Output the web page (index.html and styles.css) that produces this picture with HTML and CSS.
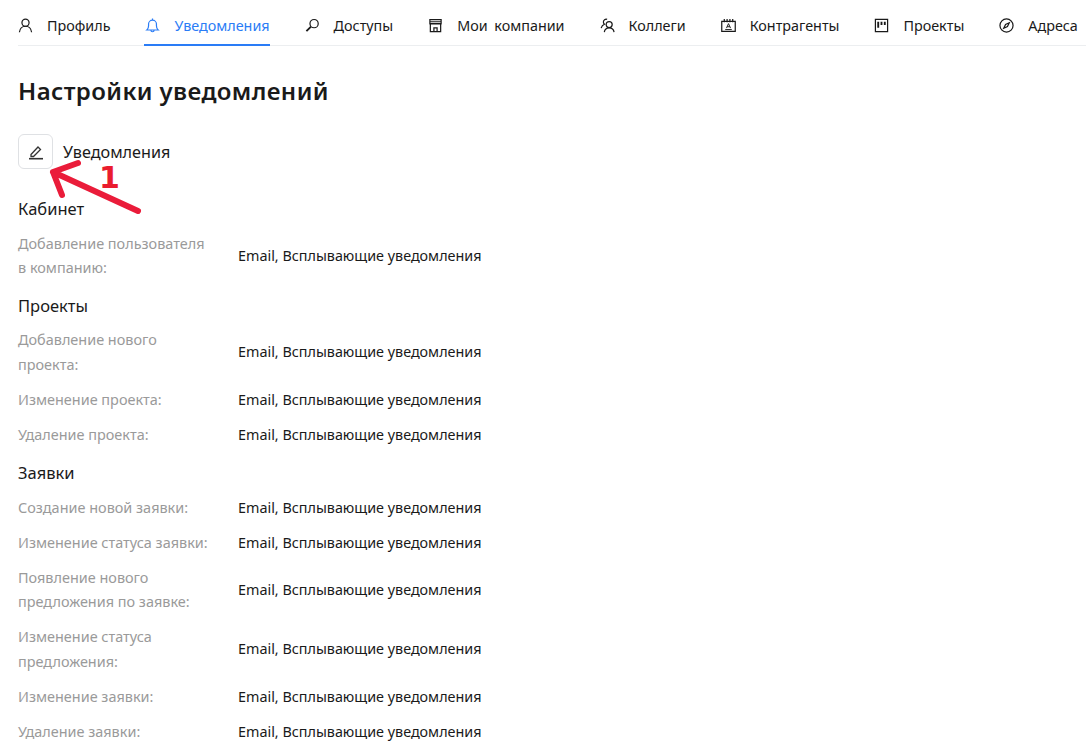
FILE: index.html
```html
<!DOCTYPE html>
<html lang="ru">
<head>
<meta charset="utf-8">
<title>Настройки уведомлений</title>
<link rel="stylesheet" href="styles.css">
</head>
<body>
<div class="page">
  <nav class="tabs">
    <a class="tab"><svg class="ico" viewBox="0 0 16 16"><circle cx="8" cy="5" r="3.800"/><path d="M1.500 15.200c.5-3.800 3-6.400 6.500-6.400s6 2.600 6.500 6.400"/></svg>Профиль</a>
    <a class="tab active"><svg class="ico" viewBox="0 0 16 16"><path d="M2 12.800c1.200-1 1.800-2.500 1.800-4.500V6.500a4.200 4.200 0 0 1 8.400 0v1.800c0 2 .6 3.500 1.800 4.500zM6.300 13c0 2.200 3.400 2.200 3.400 0M8 .6v1.600"/></svg>Уведомления</a>
    <a class="tab"><svg class="ico" viewBox="0 0 16 16"><circle cx="9.700" cy="6" r="4.400"/><path d="M6.400 9.200L1.500 14" stroke-width="2"/></svg>Доступы</a>
    <a class="tab"><svg class="ico" viewBox="0 0 16 16"><path d="M2 1.800h12V6H2zM1.500 6.200h13M2.500 6.500v8h11v-8M2 4h12M6.300 14v-3.500h3.400V14"/></svg>Мои компании</a>
    <a class="tab"><svg class="ico" viewBox="0 0 16 16"><circle cx="9.800" cy="7" r="3.200"/><path d="M4.600 15c.5-2.800 2.500-4.400 5.200-4.400s4.700 1.600 5.200 4.400M7.600 1.500A3 3 0 0 0 3.600 4.300c0 1 .5 1.800 1.200 2.400C3 7.400 1.800 8.800 1.200 10.800"/></svg>Коллеги</a>
    <a class="tab"><svg class="ico" viewBox="0 0 16 16"><path d="M.8 3.500h14.400v10.800H.8zM3.500 1v3.500M6.500 1v3.500M9.500 1v3.500M12.500 1v3.500"/><path class="thin" d="M5.800 10.800L8 6l2.200 4.800M6.500 9.300h3M4.500 12.300h7"/></svg>Контрагенты</a>
    <a class="tab"><svg class="ico" viewBox="0 0 16 16"><path d="M1.500 1.500h13v13h-13z"/><path d="M4.500 4v6.500M8 4v3.500M11.500 4v3.500" stroke-width="2"/></svg>Проекты</a>
    <a class="tab"><svg class="ico" viewBox="0 0 16 16"><circle cx="8" cy="8" r="7"/><path d="M11 5L7 6.800 5 11l4-1.800z"/></svg>Адреса</a>
  </nav>

  <h1 class="title">Настройки уведомлений</h1>

  <div class="edit-row">
    <button class="edit-btn" type="button"><svg class="ico-edit" viewBox="0 0 16 16"><path d="M3 10.500l7-7.500 2.500 2.500L5.500 12.500H3z"/><path class="rule" d="M1 14.700h14"/></svg></button>
    <span class="edit-label">Уведомления</span>
  </div>

  <h2 class="group first">Кабинет</h2>
  <div class="row"><div class="name">Добавление пользователя<br>в компанию:</div><div class="val">Email, Всплывающие уведомления</div></div>

  <h2 class="group tight">Проекты</h2>
  <div class="row"><div class="name">Добавление нового<br>проекта:</div><div class="val">Email, Всплывающие уведомления</div></div>
  <div class="row"><div class="name">Изменение проекта:</div><div class="val">Email, Всплывающие уведомления</div></div>
  <div class="row"><div class="name">Удаление проекта:</div><div class="val">Email, Всплывающие уведомления</div></div>

  <h2 class="group loose">Заявки</h2>
  <div class="row"><div class="name">Создание новой заявки:</div><div class="val">Email, Всплывающие уведомления</div></div>
  <div class="row"><div class="name">Изменение статуса заявки:</div><div class="val">Email, Всплывающие уведомления</div></div>
  <div class="row"><div class="name">Появление нового<br>предложения по заявке:</div><div class="val">Email, Всплывающие уведомления</div></div>
  <div class="row"><div class="name">Изменение статуса<br>предложения:</div><div class="val">Email, Всплывающие уведомления</div></div>
  <div class="row"><div class="name">Изменение заявки:</div><div class="val">Email, Всплывающие уведомления</div></div>
  <div class="row"><div class="name">Удаление заявки:</div><div class="val">Email, Всплывающие уведомления</div></div>

  <svg class="arrow" viewBox="0 0 96 60"><path d="M30 5L5 14l9 23M5 14l85 39"/></svg>
  <span class="mark">1</span>
</div>
</body>
</html>
```
FILE: styles.css
```css
* { box-sizing: border-box; }
html, body { margin: 0; height: 100%; overflow: hidden; background: #fff; }
body { font-family: "Noto Sans", sans-serif; color: #1a1a1a; font-size: 14.35px; }
.page { position: relative; padding-left: 18px; height: 750px; overflow: hidden; }

.tabs { display: flex; height: 46px; border-bottom: 1px solid #eceef0; gap: 35px; white-space: nowrap; word-spacing: 3px; }
.tab { display: flex; align-items: center; height: 46px; padding: 4px 0 0; color: #1a1a1a; flex: none; }
.tab.active { color: #2a7cf6; border-bottom: 2px solid #2a7cf6; margin-left: -1px; padding-left: 1px; padding-top: 6px; }
.ico { width: 15px; height: 15px; margin-right: 14px; fill: none; stroke: currentColor; stroke-width: 1.3; flex: none; }
.thin { stroke-width: 1; }

.title { margin: 29px 0 0; font-size: 24px; line-height: 32px; font-weight: 600; letter-spacing: .4px; color: #1a1a1a; }

.edit-row { display: flex; align-items: center; gap: 10px; margin-top: 27px; }
.edit-btn { width: 35px; height: 35px; padding: 0; display: flex; align-items: center; justify-content: center; background: #fff; border: 1px solid #dfe1e4; border-radius: 6px; }
.ico-edit { width: 16px; height: 16px; fill: none; stroke: #333; stroke-width: 1.3; }
.rule { stroke-width: 1.6; }
.edit-label { font-size: 16.2px; }

.group { margin: 13.5px 0 10.5px; font-size: 16.5px; line-height: 24px; font-weight: 400; }
.group.first { margin-top: 28px; }
.group.tight { margin-top: 13.2px; }
.group.loose { margin-top: 13.9px; }
.row { display: flex; align-items: center; margin-bottom: 10.5px; line-height: 24.5px; }
.name { width: 220px; flex: none; color: #9a9a9a; font-size: 14.45px; }
.val { color: #1a1a1a; }

.arrow { position: absolute; left: 48px; top: 158px; width: 96px; height: 60px; fill: none; stroke: #ea1c3a; stroke-width: 6; stroke-linecap: round; stroke-linejoin: round; }
.mark { position: absolute; left: 99px; top: 160px; font-family: "DejaVu Sans", sans-serif; font-size: 30px; line-height: 36px; font-weight: 700; color: #ea1c2e; }
```
